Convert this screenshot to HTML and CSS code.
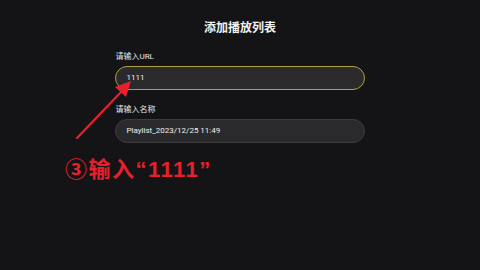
FILE: index.html
```html
<!DOCTYPE html>
<html>
<head>
<meta charset="utf-8">
<link rel="stylesheet" href="styles.css">
</head>
<body>
<div class="page">
  <h1 class="title">添加播放列表</h1>
  <div class="form">
    <div class="field">
      <div class="label">请输入URL</div>
      <div class="input focused">1111</div>
    </div>
    <div class="field">
      <div class="label">请输入名称</div>
      <div class="input">Playlist_2023/12/25 11:49</div>
    </div>
  </div>
  <svg class="arrow" width="480" height="270" viewBox="0 0 480 270">
    <line x1="77" y1="138" x2="122" y2="91" stroke="#e8202e" stroke-width="2.2" stroke-linecap="round"/>
    <polygon points="131,81 126,97 115,87" fill="#e8202e"/>
  </svg>
  <div class="note">③输入“1111”</div>
</div>
</body>
</html>
```
FILE: styles.css
```css
html, body {
  margin: 0;
  padding: 0;
  background: #141416;
}
.page {
  position: relative;
  width: 480px;
  height: 270px;
  overflow: hidden;
  font-family: "Roboto", "Noto Sans CJK SC", sans-serif;
  color: #ffffff;
  display: flex;
  flex-direction: column;
  align-items: center;
}
.title {
  margin: 19px 0 0 0;
  font-size: 12px;
  font-weight: 700;
  line-height: 18px;
  color: #f2f2f2;
}
.form {
  margin-top: 14px;
  width: 250px;
  margin-left: -1px;
  display: flex;
  flex-direction: column;
  gap: 14px;
}
.field {
  display: flex;
  flex-direction: column;
  gap: 3px;
}
.label {
  font-size: 8px;
  line-height: 12px;
  color: #e6e6e6;
  padding-left: 1px;
}
.input {
  height: 22px;
  border-radius: 12px;
  border: 1px solid #3c3c3f;
  background: #2a2a2d;
  font-size: 8px;
  line-height: 22px;
  padding-left: 11px;
  color: #f0f0f0;
}
.input.focused {
  border-color: #b49b3c;
}
.arrow {
  position: absolute;
  left: 0;
  top: 0;
}
.note {
  position: absolute;
  left: 65px;
  top: 155px;
  font-family: "Liberation Sans", "Noto Sans CJK SC", sans-serif;
  font-size: 22px;
  font-weight: 700;
  line-height: 30px;
  color: #e8202e;
  letter-spacing: 1.5px;
}
```
